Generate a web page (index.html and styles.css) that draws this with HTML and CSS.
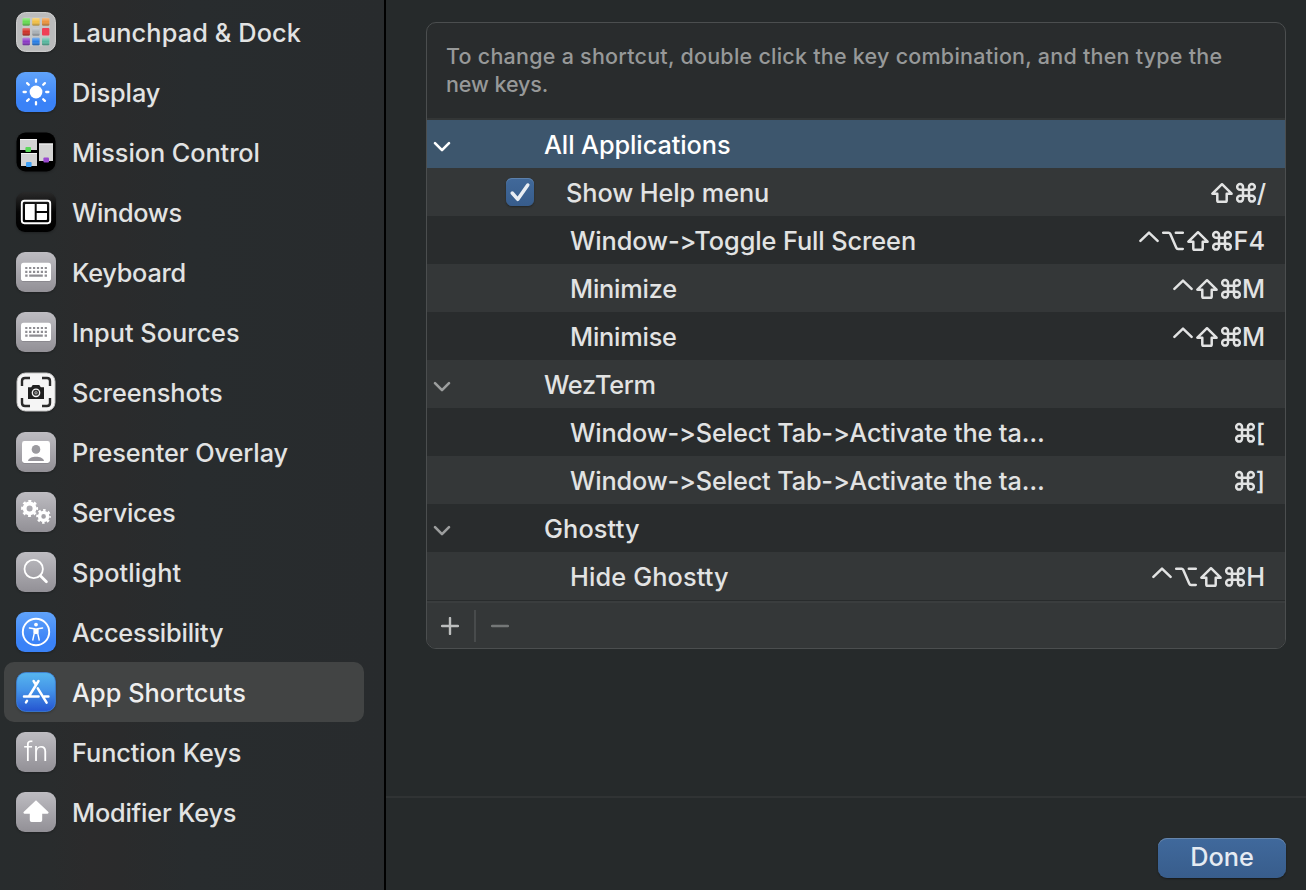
FILE: index.html
```html
<!DOCTYPE html>
<html lang="en">
<head>
<meta charset="utf-8">
<title>Keyboard Shortcuts</title>
<link rel="stylesheet" href="styles.css">
</head>
<body>
<svg class="defs" width="0" height="0" aria-hidden="true">
  <defs>
    <linearGradient id="gray" x1="0" y1="0" x2="0" y2="1"><stop offset="0" stop-color="#bdbcc1"/><stop offset="1" stop-color="#929096"/></linearGradient>
    <linearGradient id="blue" x1="0" y1="0" x2="0" y2="1"><stop offset="0" stop-color="#60a3fa"/><stop offset=".75" stop-color="#3a82f7"/><stop offset="1" stop-color="#3a82f7"/></linearGradient>
    <linearGradient id="store" x1="0" y1="0" x2="0" y2="1"><stop offset="0" stop-color="#57b6ef"/><stop offset=".45" stop-color="#4494e8"/><stop offset="1" stop-color="#2554d0"/></linearGradient>
    <linearGradient id="black" x1="0" y1="0" x2="0" y2="1"><stop offset="0" stop-color="#2a2a2a"/><stop offset=".5" stop-color="#050505"/><stop offset="1" stop-color="#000"/></linearGradient>
    <linearGradient id="shade" x1="0" y1="0" x2="0" y2="1"><stop offset="0" stop-color="#fff" stop-opacity=".4"/><stop offset=".5" stop-color="#fff" stop-opacity="0"/><stop offset="1" stop-color="#000" stop-opacity=".35"/></linearGradient>
    <symbol id="k-shift" viewBox="0 0 22 22"><path d="M11 2.2 1.4 11.7H6.3V18.4Q6.3 19.7 7.6 19.7H14.4Q15.7 19.7 15.7 18.4V11.7H20.6Z"/></symbol>
    <symbol id="k-cmd" viewBox="0 0 20 22"><path d="M7 7.8V4.9A2.9 2.9 0 1 0 4.1 7.8H15.9A2.9 2.9 0 1 0 13 4.9V16.7A2.9 2.9 0 1 0 15.9 13.8H4.1A2.9 2.9 0 1 0 7 16.7Z"/></symbol>
    <symbol id="k-opt" viewBox="0 0 22 22"><path d="M1.2 2.8H6.6Q7.7 2.8 8.2 3.8L14.3 17.8Q14.8 18.9 16 18.9H20.8M13.8 2.8H20.8"/></symbol>
    <symbol id="k-ctrl" viewBox="0 0 20 22"><path d="M1.4 10.8 10 2.6 18.6 10.8"/></symbol>
    <symbol id="keyboard" viewBox="0 0 40 40">
      <rect width="40" height="40" rx="9" fill="url(#gray)"/>
      <rect x="5" y="11.6" width="30" height="18.3" rx="2.6" fill="#77757b" opacity=".5"/>
      <rect x="5" y="10.8" width="30" height="18.3" rx="2.6" fill="#fff"/>
      <g stroke="#8f8e93" stroke-width="2.2" fill="none"><path d="M9.2 16H31" stroke-dasharray="2.2 1.7"/><path d="M9.2 19.9H31" stroke-dasharray="2.2 1.7"/><path d="M9.2 23.7H11.6M13.2 23.7H26.8M28.6 23.7H31"/></g>
    </symbol>
  </defs>
</svg>
<div class="window">
  <nav class="sidebar">
    <a class="item"><svg class="icon" viewBox="0 0 40 40"><rect x=".6" y=".6" width="38.8" height="38.8" rx="9" fill="#babbbc" stroke="#d7d7d7"/><rect x="6.2" y="5.2" width="27.8" height="29" rx="3" fill="#c5c7c7"/>
      <g><rect x="6.5" y="6" width="7.4" height="7.5" rx="1" fill="#65db50"/><rect x="16.2" y="6" width="7.4" height="7.5" rx="1" fill="#f2bf42"/><rect x="26" y="6" width="7.4" height="7.5" rx="1" fill="#eb933a"/><rect x="6.5" y="16" width="7.4" height="7.5" rx="1" fill="#cf2f26"/><rect x="16.2" y="16" width="7.4" height="7.5" rx="1" fill="#a9b0b5"/><rect x="26" y="16" width="7.4" height="7.5" rx="1" fill="#ef4056"/><rect x="6.5" y="25.8" width="7.4" height="7.5" rx="1" fill="#8b38c6"/><rect x="16.2" y="25.8" width="7.4" height="7.5" rx="1" fill="#287fe6"/><rect x="26" y="25.8" width="7.4" height="7.5" rx="1" fill="#57b89f"/></g>
      <g fill="url(#shade)"><rect x="6.5" y="6" width="7.4" height="7.5" rx="1"/><rect x="16.2" y="6" width="7.4" height="7.5" rx="1"/><rect x="26" y="6" width="7.4" height="7.5" rx="1"/><rect x="6.5" y="16" width="7.4" height="7.5" rx="1"/><rect x="16.2" y="16" width="7.4" height="7.5" rx="1"/><rect x="6.5" y="25.8" width="7.4" height="7.5" rx="1"/><rect x="16.2" y="25.8" width="7.4" height="7.5" rx="1"/><rect x="26" y="25.8" width="7.4" height="7.5" rx="1"/></g></svg><span>Launchpad &amp; Dock</span></a>
    <a class="item"><svg class="icon" viewBox="0 0 40 40"><rect width="40" height="40" rx="9" fill="url(#blue)"/><circle cx="20" cy="20" r="6.4" fill="#fff"/><path d="M20 7.6V9.8M20 30.2V32.4M7.6 20H9.8M30.2 20H32.4M11.1 11.1 12.8 12.8M27.2 27.2 28.9 28.9M28.9 11.1 27.2 12.8M12.8 27.2 11.1 28.9" stroke="#fff" stroke-width="2.3" stroke-linecap="round"/></svg><span>Display</span></a>
    <a class="item"><svg class="icon" viewBox="0 0 40 40"><rect x=".5" y=".5" width="39" height="39" rx="9"/><g fill="#d3d3d3"><rect x="4" y="7" width="17" height="11"/><rect x="5" y="21" width="16" height="13"/><rect x="23" y="11.5" width="14" height="17.5"/></g><path d="M4 7.5H21M5 21.5H21M23 12H37" stroke="#f5f5f5"/><rect x="9.4" y="15" width="5.6" height="5" rx="1" fill="#5cd85a"/><rect x="10" y="30" width="5.6" height="5" rx="1" fill="#3fa0f5"/><rect x="27.4" y="25.4" width="5.6" height="5" rx="1" fill="#9a49cf"/></svg><span>Mission Control</span></a>
    <a class="item"><svg class="icon" viewBox="0 0 40 40"><rect width="40" height="40" rx="9" fill="url(#black)"/><rect x="5.8" y="8.8" width="28.4" height="22.4" rx="2.6" fill="none" stroke="#fff" stroke-width="1.9"/><path d="M9.7 12H18.7V28H9.7Q9 28 9 27.3V12.7Q9 12 9.7 12ZM20.7 12H30.3Q31 12 31 12.7V19H20.7ZM20.7 21H31V27.3Q31 28 30.3 28H20.7Z" fill="#fff"/></svg><span>Windows</span></a>
    <a class="item"><svg class="icon"><use href="#keyboard"/></svg><span>Keyboard</span></a>
    <a class="item"><svg class="icon"><use href="#keyboard"/></svg><span>Input Sources</span></a>
    <a class="item"><svg class="icon" viewBox="0 0 40 40"><rect x="1" y="1" width="38" height="38" rx="8.5" fill="#f5f5f5" stroke="#c4c4c4"/><path d="M6 14V9Q6 6 9 6H14M26 6H31Q34 6 34 9V14M34 26V31Q34 34 31 34H26M14 34H9Q6 34 6 31V26" fill="none" stroke="#2b2b2b" stroke-width="2.4"/><path d="M12 15.2H15.2L16.7 13H23.3L24.8 15.2H28V27H12Z" fill="#202020"/><circle cx="20" cy="20.8" r="3.7" fill="#333" stroke="#f5f5f5" stroke-width="1.3"/><circle cx="20" cy="20.8" r="1.2" fill="none" stroke="#ddd" stroke-width=".7"/></svg><span>Screenshots</span></a>
    <a class="item"><svg class="icon" viewBox="0 0 40 40"><rect width="40" height="40" rx="9" fill="url(#gray)"/><rect x="6" y="9.8" width="28" height="22" rx="2.4" fill="#77757b" opacity=".5"/><rect x="6" y="9" width="28" height="22" rx="2.4" fill="#fff"/><circle cx="20" cy="17.4" r="4.3" fill="#9b9a9f"/><path d="M12 29C13 23.4 27 23.4 28 29Z" fill="#98969c"/></svg><span>Presenter Overlay</span></a>
    <a class="item"><svg class="icon" viewBox="0 0 40 40"><rect width="40" height="40" rx="9" fill="url(#gray)"/><g fill="none" stroke="#fff"><circle cx="13.6" cy="16.4" r="4.9" stroke-width="3.8"/><circle cx="13.6" cy="16.4" r="7.3" stroke-width="2.4" stroke-dasharray="2.9 2.83" stroke-dashoffset="1.45"/><circle cx="27.6" cy="24.4" r="4" stroke-width="3.4"/><circle cx="27.6" cy="24.4" r="6.3" stroke-width="2.2" stroke-dasharray="2.5 2.45" stroke-dashoffset="1.25"/></g></svg><span>Services</span></a>
    <a class="item"><svg class="icon" viewBox="0 0 40 40"><rect width="40" height="40" rx="9" fill="url(#gray)"/><g fill="none" stroke="#fff"><circle cx="17.7" cy="17" r="9.2" stroke-width="1.8"/><path d="M24.4 23.8 30.4 29.8" stroke-width="2.8" stroke-linecap="round"/></g></svg><span>Spotlight</span></a>
    <a class="item"><svg class="icon" viewBox="0 0 40 40"><rect width="40" height="40" rx="9" fill="url(#blue)"/><circle cx="20" cy="20" r="13.2" fill="none" stroke="#fff" stroke-width="1.9"/><circle cx="20" cy="12.6" r="1.9" fill="#fff"/><path d="M13.4 16 18.3 16.7V21.2L16.8 28M26.6 16 21.7 16.7V21.2L23.2 28" fill="none" stroke="#fff" stroke-width="1.4" stroke-linecap="round" stroke-linejoin="round"/><path d="M17.6 16.3H22.4V21.3L20 22.2 17.6 21.3Z" fill="#fff"/></svg><span>Accessibility</span></a>
    <a class="item selected"><svg class="icon" viewBox="0 0 40 40"><rect x=".6" y=".6" width="38.8" height="38.8" rx="9" fill="url(#store)" stroke="#3d86e2" stroke-width=".8"/><g fill="none" stroke="#fff" stroke-width="2.5" stroke-linecap="round"><path d="M22.5 9 13.2 24M17.6 9 19.4 12M21.8 16.4 30.6 30.6M8 24.4H22.6M28.2 24.4H32.4M11 28.8 10 30.4"/></g></svg><span>App Shortcuts</span></a>
    <a class="item"><svg class="icon" viewBox="0 0 40 40"><rect width="40" height="40" rx="9" fill="url(#gray)"/><text class="fn" x="20.2" y="28.6" text-anchor="middle">fn</text></svg><span>Function Keys</span></a>
    <a class="item"><svg class="icon" viewBox="0 0 40 40"><rect width="40" height="40" rx="9" fill="url(#gray)"/><path d="M20 8.3 32.4 20Q33.2 21.4 31.6 21.7H26.2V28.2Q26.2 30 24.4 30H15.6Q13.8 30 13.8 28.2V21.7H8.4Q6.8 21.4 7.6 20Z" fill="#fff"/></svg><span>Modifier Keys</span></a>
  </nav>
  <main class="content">
    <section class="panel">
      <p class="hint"><span>To change a shortcut, double click the key combination, and then type the</span><br><span class="hint-end">new keys.</span></p>
      <div class="row group active"><svg class="chev" viewBox="0 0 18 12"><path d="M2 2.2 9 9.2 16 2.2"/></svg><span>All Applications</span></div>
      <div class="row check"><svg class="box" viewBox="0 0 28 28"><path d="M6.2 15 11.8 21.3 21.8 7"/></svg><span>Show Help menu</span><div class="keys" aria-label="⇧⌘/"><svg class="k22"><use href="#k-shift"/></svg><svg class="k20"><use href="#k-cmd"/></svg><b>/</b></div></div>
      <div class="row"><span>Window-&gt;Toggle Full Screen</span><div class="keys" aria-label="⌃⌥⇧⌘F4"><svg class="k20"><use href="#k-ctrl"/></svg><svg class="k22"><use href="#k-opt"/></svg><svg class="k22"><use href="#k-shift"/></svg><svg class="k20"><use href="#k-cmd"/></svg><b>F4</b></div></div>
      <div class="row mini"><span>Minimize</span><div class="keys" aria-label="⌃⇧⌘M"><svg class="k20"><use href="#k-ctrl"/></svg><svg class="k22"><use href="#k-shift"/></svg><svg class="k20"><use href="#k-cmd"/></svg><b>M</b></div></div>
      <div class="row mini"><span>Minimise</span><div class="keys" aria-label="⌃⇧⌘M"><svg class="k20"><use href="#k-ctrl"/></svg><svg class="k22"><use href="#k-shift"/></svg><svg class="k20"><use href="#k-cmd"/></svg><b>M</b></div></div>
      <div class="row group wez"><svg class="chev" viewBox="0 0 18 12"><path d="M2 2.2 9 9.2 16 2.2"/></svg><span>WezTerm</span></div>
      <div class="row tab"><span>Window-&gt;Select Tab-&gt;Activate the ta…</span><div class="keys" aria-label="⌘["><svg class="k20"><use href="#k-cmd"/></svg><b>[</b></div></div>
      <div class="row tab"><span>Window-&gt;Select Tab-&gt;Activate the ta…</span><div class="keys" aria-label="⌘]"><svg class="k20"><use href="#k-cmd"/></svg><b>]</b></div></div>
      <div class="row group ghost"><svg class="chev" viewBox="0 0 18 12"><path d="M2 2.2 9 9.2 16 2.2"/></svg><span>Ghostty</span></div>
      <div class="row ghost"><span>Hide Ghostty</span><div class="keys" aria-label="⌃⌥⇧⌘H"><svg class="k20"><use href="#k-ctrl"/></svg><svg class="k22"><use href="#k-opt"/></svg><svg class="k22"><use href="#k-shift"/></svg><svg class="k20"><use href="#k-cmd"/></svg><b>H</b></div></div>
      <div class="tools"><svg class="plus" viewBox="0 0 18 18"><path d="M9 1V17M1 9H17"/></svg><i></i><svg class="minus" viewBox="0 0 18 18"><path d="M1 9H17"/></svg></div>
    </section>
    <footer class="footer"><button class="done"><span>Done</span></button></footer>
  </main>
</div>
</body>
</html>
```
FILE: styles.css
```css
* { box-sizing: border-box; }
body { margin: 0; font-family: Inter, "Liberation Sans", sans-serif; font-size: 25.3px; font-weight: 460; font-feature-settings: "calt" 0; background: #262a2b; color: #e2e3e3; overflow: hidden; }
.defs { position: absolute; }
.window { display: flex; width: 1306px; height: 890px; }
.sidebar { width: 386px; flex: none; padding: 2px 20px 0 4px; border-right: 2px solid #000; background: linear-gradient(90deg, #282c2d 0, #292c2d 50px, #2b2b2c 90px, #2a2b2c 120px, #282c2e 190px, #282b2d 100%); }
.item { display: flex; align-items: center; height: 60px; padding-left: 12px; gap: 16px; border-radius: 10px; white-space: nowrap; letter-spacing: -.07px; }
.item span { line-height: 30px; padding-top: 2px; }
.item.selected { background: #424444; color: #eeeeee; letter-spacing: .05px; }
/* optical tracking per label */
.item:nth-child(1), .item:nth-child(10) { letter-spacing: .12px; }
.item:nth-child(4) { letter-spacing: -.34px; }
.item:nth-child(5), .item:nth-child(9) { letter-spacing: -.24px; }
.item:nth-child(6) { letter-spacing: 0; }
.item:nth-child(11), .item:nth-child(14) { letter-spacing: -.2px; }
.icon { width: 40px; height: 40px; flex: none; letter-spacing: 0; filter: drop-shadow(0 1px 1px rgba(0,0,0,.25)); }
.fn { font: 360 26px Inter, sans-serif; fill: #fff; }
.content { flex: 1; display: flex; flex-direction: column; padding-top: 22px; }
.panel { width: 860px; height: 627px; margin-left: 40px; border: 1px solid #4b4e4f; border-radius: 10px; overflow: hidden; background: #292c2d; }
.hint { margin: 0; height: 97px; padding: 19px 19px 0; border-bottom: 2px solid #333636; font-size: 21.5px; line-height: 28px; letter-spacing: .24px; color: #979999; white-space: nowrap; }
.hint-end { letter-spacing: -.08px; }
.row { display: flex; align-items: center; height: 48px; padding: 0 20px 0 143px; white-space: nowrap; letter-spacing: -.08px; }
.row:nth-of-type(even) { background: #343738; }
.row.group { padding-left: 6px; }
.group span { margin-left: 93px; }
.row.active { background: #3d566d; color: #fff; }
.row.check { padding-left: 79px; padding-right: 19px; }
.check span { margin-left: 32px; }
.row.mini { letter-spacing: -.2px; }
.row.wez { letter-spacing: -.3px; }
.row.tab { letter-spacing: -.15px; }
.row.ghost { letter-spacing: .14px; }
.chev { width: 18px; height: 12px; margin-top: 5px; fill: none; stroke: #9c9e9e; stroke-width: 2.6; stroke-linecap: round; stroke-linejoin: round; }
.active .chev { stroke: #fff; }
.box { width: 28px; height: 28px; border-radius: 6px; background: linear-gradient(#41699a, #375c8b); box-shadow: inset 0 1px #5c80ab, 0 1px 2px rgba(0,0,0,.35); fill: none; stroke: #e8edf3; stroke-width: 3.5; stroke-linecap: round; stroke-linejoin: round; }
.keys { display: flex; align-items: center; margin-left: auto; gap: 3px; letter-spacing: 0; fill: none; stroke: #e2e3e3; stroke-width: 2.5; stroke-linecap: round; stroke-linejoin: round; }
.keys svg { margin-top: 1px; }
.keys b { font-weight: inherit; margin-left: -2px; }
.k20 { width: 20px; height: 22px; }
.k22 { width: 22px; height: 22px; }
.tools { display: flex; align-items: center; height: 49px; padding-top: 1px; border-top: 1px solid #282b2c; box-shadow: inset 0 2px #3a3d3e; background: #343738; fill: none; stroke-linecap: round; stroke-width: 2.4; }
.plus { width: 18px; height: 18px; margin-left: 14px; stroke: #bcbebe; }
.minus { width: 18px; height: 18px; stroke: #747777; margin-left: 15px; }
.tools i { width: 2px; height: 32px; margin-left: 15px; background: #484b4c; }
.footer { margin-top: auto; height: 94px; border-top: 2px solid #303334; display: flex; justify-content: flex-end; padding: 40px 20px 0; }
.done { width: 128px; height: 40px; border: 0; border-radius: 9px; padding: 0 0 3px; font: inherit; color: #e5ebf2; background: linear-gradient(#40699c, #385d8c); box-shadow: inset 0 1px #6685ab, 0 1px 2px rgba(0,0,0,.4); }
```
